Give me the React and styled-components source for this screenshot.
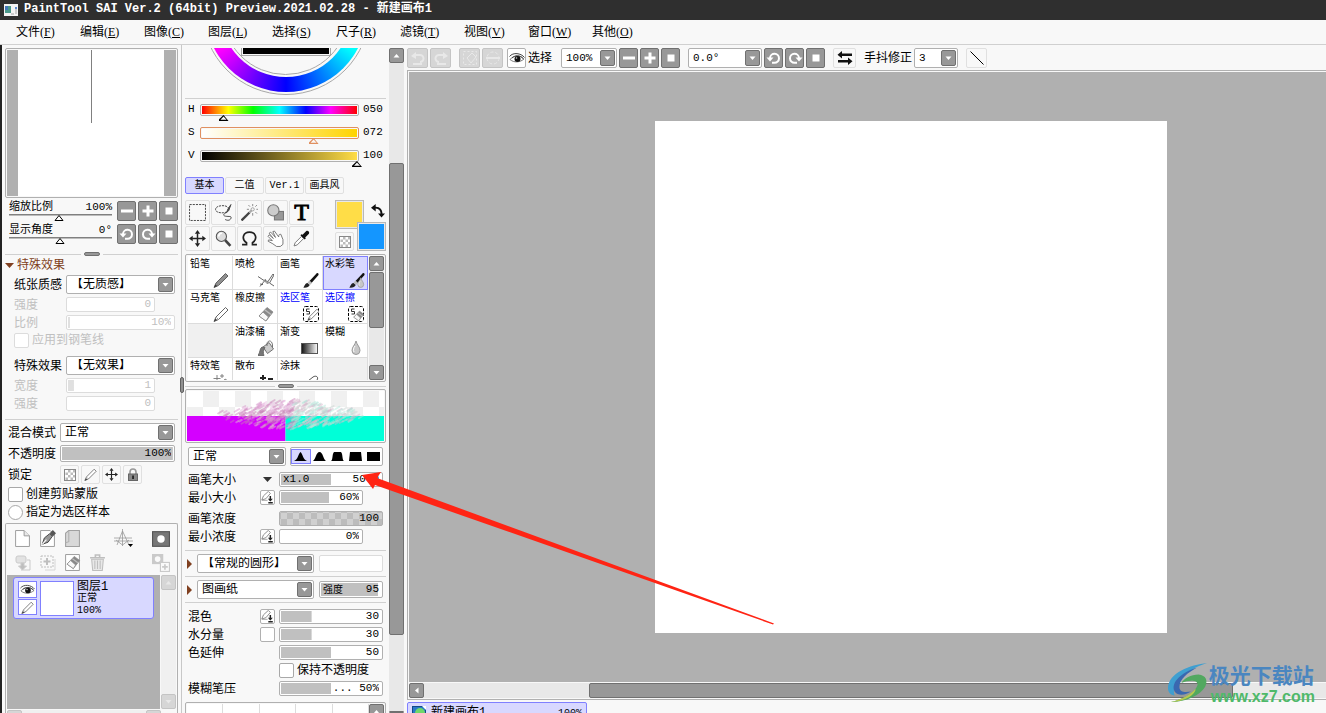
import React, { useState } from "react";
import styled, { createGlobalStyle, css } from "styled-components";

const GlobalStyle = createGlobalStyle`
  * {
    box-sizing: border-box;
  }
  body {
    margin: 0;
    overflow: hidden;
    background: #f8f8f8;
    color: #000;
    font: 12px/15px "Liberation Mono", "Noto Sans CJK SC", monospace;
  }
  button, input, select {
    font: inherit;
    color: inherit;
    margin: 0;
    padding: 0;
  }
  svg {
    display: block;
    flex: none;
  }
`;

const Window = styled.div`
  position: relative;
  display: flex;
  flex-direction: column;
  height: 100vh;
  overflow: hidden;
`;

const TitleBar = styled.header`
  flex: none;
  height: 20px;
  display: flex;
  align-items: center;
  gap: 6px;
  padding: 0 4px 1px;
  background: #2f2f2f;
  color: #fff;
  font-weight: bold;
  white-space: pre;
`;

const MenuBar = styled.nav`
  flex: none;
  height: 25px;
  display: flex;
  align-items: center;
  gap: 20px;
  padding: 2px 0 0 16px;
  border-bottom: 1px solid #d0d0d0;
`;

const MenuItem = styled.button`
  width: 44px;
  border: 0;
  background: none;
  white-space: nowrap;
  text-align: left;
  span {
    font-family: "Liberation Serif", serif;
  }
`;

const Body = styled.div`
  flex: 1;
  min-height: 0;
  display: flex;
  border-left: 2px solid #222;
`;

const LeftPanel = styled.aside`
  flex: 0 0 180px;
  display: flex;
  flex-direction: column;
  padding: 3px 3px 0;
  border-right: 1px solid #c8c8c8;
  overflow: hidden;
`;

const BrushPanel = styled.aside`
  flex: 0 0 225px;
  display: flex;
  gap: 3px;
  padding: 3px 3px 0;
  overflow: hidden;
`;

const BrushColumn = styled.div`
  flex: 0 0 201px;
  display: flex;
  flex-direction: column;
`;

const Main = styled.main`
  flex: 1;
  min-width: 0;
  display: flex;
  flex-direction: column;
  padding-top: 3px;
`;

/* shared controls */

const Rule = styled.hr`
  flex: none;
  width: 100%;
  height: 1px;
  border: 0;
  margin: ${(p) => p.$gap || "3px 0"};
  background: #d0d0d0;
`;

const SplitLine = styled.div`
  flex: none;
  display: flex;
  align-items: center;
  gap: 3px;
  height: 4px;
  margin: ${(p) => p.$gap};
  &::before,
  &::after {
    content: "";
    flex: 1;
    height: 1px;
    background: #d0d0d0;
  }
  i {
    width: 16px;
    height: 4px;
    border: 1px solid #707070;
    border-radius: 2px;
    background: #989898;
  }
`;

const GrayButton = styled.button`
  flex: none;
  width: ${(p) => p.$w || 19}px;
  height: ${(p) => p.$h || 20}px;
  display: flex;
  align-items: center;
  justify-content: center;
  border: 1px solid #707070;
  border-radius: 2px;
  background: #989898;
  color: #fff;
  ${(p) =>
    p.$off &&
    css`
      border-color: #c4c4c4;
      background: #d6d6d6;
      color: #e8e8e8;
    `}
`;

const FlatButton = styled.button`
  flex: none;
  width: ${(p) => p.$w || 19}px;
  height: ${(p) => p.$h || 20}px;
  display: flex;
  align-items: center;
  justify-content: center;
  border: 1px solid #e0e0e0;
  border-radius: 2px;
  background: ${(p) => (p.$white ? "#fff" : "#f8f8f8")};
  ${(p) => p.$white && "border-color: #b0b0b0;"}
`;

const SelectBox = styled.div`
  position: relative;
  flex: ${(p) => (p.$w ? `0 0 ${p.$w}px` : 1)};
  min-width: 0;
  height: ${(p) => p.$h || 19}px;
  select {
    display: block;
    appearance: none;
    width: 100%;
    height: 100%;
    padding: ${(p) => (p.$num ? 0 : 2)}px 0 0 4px;
    border: 1px solid #b0b0b0;
    border-radius: 2px;
    background: #fff;
    font-size: ${(p) => (p.$num ? 11 : 12)}px;
  }
  svg {
    position: absolute;
    top: 2px;
    right: 2px;
    bottom: 2px;
    height: calc(100% - 4px);
    border: 1px solid #707070;
    border-radius: 2px;
    background: #989898;
    pointer-events: none;
  }
`;

const Select = ({ id, label, value, ...rest }) => (
  <SelectBox {...rest}>
    <select id={id} aria-label={label} defaultValue={value}>
      <option>{value}</option>
    </select>
    <svg width="15" viewBox="0 0 13 13">
      <path d="M3.500 5h6l-3 3.500z" fill="#fff" />
    </svg>
  </SelectBox>
);

const checker = css`
  background: repeating-conic-gradient(#bcbcbc 0 25%, #d0d0d0 0 50%) 1px 1px / 12px 12px;
`;

const FieldBox = styled.div`
  flex: 1;
  width: ${(p) => (p.$w ? `${p.$w}px` : "auto")};
  min-width: 0;
  height: ${(p) => p.$h || 15}px;
  display: flex;
  align-items: center;
  padding: 0 3px;
  margin-right: ${(p) => p.$end || 0}px;
  border: 1px solid ${(p) => (p.$off ? "#dcdcdc" : "#b0b0b0")};
  border-radius: 2px;
  background: linear-gradient(
      ${(p) => (p.$off ? "#e0e0e0, #e0e0e0" : "#c0c0c0, #c0c0c0")}
    )
    1px 1px / calc(${(p) => p.$fill || 0}% - 1px) calc(100% - 2px) no-repeat #fff;
  color: ${(p) => (p.$off ? "#c0c0c0" : "#000")};
  font-size: 11px;
  ${(p) => p.$checker && checker}
  label {
    padding-top: 2px;
    font-size: 10px;
  }
  input {
    flex: 1;
    width: 0;
    min-width: 0;
    height: 13px;
    border: 0;
    background: none;
    text-align: right;
    outline: 0;
  }
`;

const Texture = styled(FieldBox)`
  flex: 0 0 64px;
`;

const Field = ({ id, label, value, prefix, ...rest }) => (
  <FieldBox {...rest}>
    {prefix && <span>{prefix}</span>}
    <input id={id} aria-label={label} defaultValue={value} disabled={rest.$off} />
  </FieldBox>
);

const Tick = styled.input`
  appearance: none;
  flex: none;
  width: 15px;
  height: 15px;
  margin: 0;
  border: 1px solid ${(p) => (p.disabled ? "#dcdcdc" : "#a8a8a8")};
  border-radius: ${(p) => (p.type === "radio" ? "50%" : "2px")};
  background: #fff;
`;

const VScroll = styled.div`
  flex: 0 0 15px;
  display: flex;
  flex-direction: column;
  background: #e8e8e8;
`;

const Spacer = styled.div`
  flex: ${(p) => (p.$size ? `0 0 ${p.$size}px` : 1)};
`;

const Thumb = styled.div`
  flex: none;
  width: ${(p) => p.$w || "15px"};
  height: ${(p) => p.$h || "15px"};
  border: 1px solid #707070;
  border-radius: 2px;
  background: #989898;
`;

const Caret = ({ dir = "down" }) => {
  const d = {
    up: "M3.500 8.500h6l-3-3.500z",
    down: "M3.500 5h6l-3 3.500z",
    left: "M8.500 3.500v6L5 6.500z",
    right: "M5 3.500v6l3.500-3z",
  };
  return (
    <svg width="13" height="13" viewBox="0 0 13 13">
      <path d={d[dir]} fill="currentColor" />
    </svg>
  );
};

/* navigator */

const Navigator = styled.div`
  flex: none;
  height: 150px;
  padding: 1px;
  border: 1px solid #b0b0b0;
  border-radius: 2px;
  svg {
    width: 100%;
    height: 100%;
  }
`;

const NavRow = styled.div`
  display: flex;
  gap: 2px;
  height: 20px;
  margin-top: 3px;
  padding: 0 1px 0 4px;
`;

const NavSlider = styled.div`
  flex: 1;
  margin-right: 3px;
  display: grid;
  grid-template-columns: 1fr auto;
  font-size: 11px;
  line-height: 13px;
  svg {
    grid-column: 1 / 3;
  }
`;

const Group = styled.div`
  flex: none;
  display: flex;
  flex-direction: column;
  gap: 3px;
  padding: 0 3px 0 ${(p) => p.$left}px;
  margin-top: ${(p) => p.$top || 0}px;
`;

const Row = styled.div`
  display: flex;
  align-items: center;
  gap: ${(p) => p.$gap || 0}px;
  height: ${(p) => p.$h || 19}px;
  color: ${(p) => (p.$off ? "#c0c0c0" : "#000")};
  white-space: nowrap;
  > label:first-child,
  > span:first-child {
    flex: 0 0 52px;
    padding-top: 3px;
  }
`;

const CheckRow = styled.label`
  display: flex;
  align-items: center;
  gap: 3px;
  height: 15px;
  color: ${(p) => (p.$off ? "#c0c0c0" : "#000")};
  span {
    padding-top: 2px;
  }
`;

const SectionTitle = styled.button`
  flex: none;
  display: flex;
  align-items: center;
  gap: 3px;
  height: 16px;
  margin: 1px 0 2px;
  border: 0;
  background: none;
  color: #804020;
  span {
    padding-top: 2px;
  }
`;

/* layers */

const LayerPanel = styled.section`
  flex: none;
  margin-top: 3px;
  padding: 5px 1px 0;
  border: 1px solid #b0b0b0;
  border-bottom: 0;
  border-radius: 2px 2px 0 0;
`;

const LayerTools = styled.div`
  display: grid;
  grid-template-columns: repeat(4, 17px) 21px 1fr;
  grid-auto-rows: 17px;
  gap: 7px 8px;
  padding: 1px 6px 4px 7px;
`;

const BareButton = styled.button`
  display: flex;
  justify-content: center;
  align-items: center;
  border: 0;
  background: none;
  grid-column: ${(p) => p.$col || "auto"};
  justify-self: ${(p) => (p.$end ? "end" : "auto")};
  opacity: ${(p) => (p.$off ? 0.35 : 1)};
`;

const LayerArea = styled.div`
  display: flex;
  height: 134px;
  gap: 1px;
`;

const LayerList = styled.div`
  flex: 1;
  padding: 2px 6px;
  background: #b0b0b0;
`;

const Layer = styled.div`
  display: flex;
  gap: 3px;
  height: 42px;
  padding: 3px 4px;
  border: 1px solid #8080ff;
  border-radius: 3px;
  background: #d8d8ff;
`;

const LayerSwitches = styled.div`
  display: flex;
  flex-direction: column;
  gap: 1px;
  button {
    width: 19px;
    height: 17px;
    display: flex;
    align-items: center;
    justify-content: center;
    border: 1px solid #8080ff;
    background: #fff;
  }
`;

const LayerThumb = styled.div`
  width: 34px;
  height: 35px;
  border: 1px solid #8080ff;
  background: #fff;
`;

const LayerInfo = styled.div`
  display: flex;
  flex-direction: column;
  font-size: 10px;
  line-height: 12px;
  strong {
    font-weight: normal;
    font-size: 12px;
  }
`;

const PaleScroll = styled.div`
  flex: 0 0 15px;
  display: flex;
  flex-direction: ${(p) => (p.$row ? "row" : "column")};
  justify-content: space-between;
  width: ${(p) => (p.$row ? "154px" : "auto")};
  margin-top: ${(p) => (p.$row ? "1px" : 0)};
  background: #f0f0f0;
`;

/* colour */

const WheelView = styled.div`
  flex: none;
  height: 47px;
  display: flex;
  justify-content: center;
  align-items: flex-end;
  overflow: hidden;
`;

const Ring = styled.div`
  flex: none;
  display: flex;
  align-items: center;
  justify-content: center;
  width: ${(p) => p.$d}px;
  height: ${(p) => p.$d}px;
  border-radius: 50%;
  border: ${(p) => (p.$line ? "1px solid #a8a8a8" : 0)};
  background: ${(p) => p.$bg || "#f8f8f8"};
`;

const ShadeSquare = styled.div`
  width: 90px;
  height: 90px;
  padding: 1px;
  border: 1px solid #a8a8a8;
  background: linear-gradient(#fd4, #000 90%) content-box, #f8f8f8;
`;

const ColorRow = styled.label`
  flex: none;
  display: grid;
  grid-template-columns: 12px 159px 1fr;
  height: 23px;
  padding-left: 3px;
  font-size: 11px;
  output {
    padding-left: 4px;
  }
`;

const ColorTrack = styled.div`
  display: flex;
  height: 12px;
  margin-top: 2px;
  padding: 1px;
  border: 1px solid ${(p) => (p.$hot ? "#e09060" : "#b0b0b0")};
  border-radius: 2px;
  background: linear-gradient(to right, ${(p) => p.$colors}) content-box;
`;

const ColorRange = styled.input`
  appearance: none;
  flex: 1;
  height: 17px;
  margin: 0 -5px 0 -5px;
  background: none;
  outline: 0;
  &::-webkit-slider-runnable-track {
    height: 17px;
  }
  &::-webkit-slider-thumb {
    appearance: none;
    width: 10px;
    height: 6px;
    margin-top: 9px;
    background: ${(p) => (p.$hot ? "#e09060" : "#000")};
    clip-path: polygon(
      50% 0, 100% 100%, 0 100%, 0 80%, 20% 80%, 80% 80%, 50% 26%, 20% 80%, 0 80%
    );
  }
`;

const Tabs = styled.div`
  flex: none;
  display: flex;
  gap: 1px;
  margin-top: 6px;
`;

const Tab = styled.button`
  width: 39px;
  height: 17px;
  padding-top: 1px;
  border: 1px solid ${(p) => (p.$on ? "#8080ff" : "#e0e0e0")};
  border-radius: 2px;
  background: ${(p) => (p.$on ? "#d8d8ff" : "#f8f8f8")};
  font-size: 10px;
  line-height: 14px;
`;

const ToolArea = styled.div`
  flex: none;
  display: flex;
  justify-content: space-between;
  margin-top: 6px;
`;

const ToolGrid = styled.div`
  display: grid;
  grid-template-columns: repeat(5, 25px);
  grid-auto-rows: 25px;
  gap: 1px;
`;

const TextTool = styled.span`
  font: 24px/23px "Liberation Serif", serif;
  -webkit-text-stroke: 1px #000;
`;

const Swatches = styled.div`
  display: grid;
  grid-template-columns: 22px 7px 22px;
  grid-template-rows: 22px 7px 22px;
`;

const Swatch = styled.button`
  grid-area: ${(p) => p.$area};
  border: 1px solid #b8b8b8;
  background: ${(p) => p.$color};
  box-shadow: inset 0 0 0 1px #e8e8e8;
`;

const SwapButton = styled(BareButton)`
  grid-area: 1 / 3;
  justify-self: end;
`;

const ClearColor = styled(FlatButton)`
  grid-area: 3 / 1;
  align-self: end;
`;

/* brushes */

const BrushBox = styled.div`
  flex: none;
  display: flex;
  gap: 1px;
  height: 128px;
  margin-top: 3px;
  padding: 1px 1px 1px 2px;
  border: 1px solid #b0b0b0;
  border-radius: 2px;
  overflow: hidden;
`;

const BrushGrid = styled.div`
  display: grid;
  grid-template-columns: repeat(4, 45px);
  grid-auto-rows: 34px;
  overflow: hidden;
`;

const Brush = styled.button`
  display: flex;
  flex-direction: column;
  justify-content: space-between;
  padding: 2px 3px 1px 2px;
  border: 0;
  border-right: 1px solid #dcdcdc;
  border-bottom: 1px solid #dcdcdc;
  background: ${(p) => (p.$empty ? "#f0f0f0" : "#fff")};
  color: ${(p) => (p.$blue ? "#00f" : "#000")};
  font-size: 10px;
  line-height: 14px;
  white-space: nowrap;
  text-align: left;
  svg {
    align-self: flex-end;
  }
  ${(p) =>
    p.$on &&
    css`
      padding: 1px 2px 1px 1px;
      border: 1px solid #8080ff;
      background: #d8d8ff;
    `}
`;

const Preview = styled.div`
  flex: none;
  height: 54px;
  padding: 1px;
  border: 1px solid #b0b0b0;
  border-radius: 2px;
`;

const Shapes = styled.div`
  flex: 1;
  display: flex;
  height: 19px;
  padding: 1px 0;
  border: 1px solid #b0b0b0;
  border-radius: 2px;
  background: #fff;
  button {
    flex: 1;
    display: flex;
    align-items: center;
    justify-content: center;
    border: 0;
    background: none;
  }
  button:first-child {
    border: 1px solid #8080ff;
    background: #d8d8ff;
  }
`;

const Param = styled.div`
  flex: none;
  display: grid;
  grid-template-columns: 1fr 15px 104px;
  grid-template-rows: 15px;
  gap: 4px;
  align-items: center;
  height: 15px;
  margin-top: ${(p) => p.$top || 3}px;
  padding: 0 3px;
  white-space: nowrap;
  > label {
    padding-top: 3px;
  }
`;

const TextureRow = styled.div`
  flex: none;
  display: flex;
  align-items: center;
  gap: 5px;
  padding: 0 3px 0 2px;
`;

const KeepOpacity = styled(CheckRow)`
  flex: none;
  margin-top: 3px;
  padding-left: 94px;
`;

const StrokeBox = styled.div`
  flex: none;
  display: grid;
  grid-template-columns: repeat(5, 1fr) 15px;
  height: 30px;
  margin-top: 6px;
  padding: 1px;
  border: 1px solid #b0b0b0;
  border-radius: 2px;
  i {
    border-right: 1px solid #dcdcdc;
    background: #fff;
  }
`;

/* canvas side */

const Toolbar = styled.div`
  flex: none;
  display: flex;
  align-items: center;
  gap: 2px;
  height: 20px;
`;

const Set = styled.div`
  display: flex;
  align-items: center;
  gap: 2px;
  margin-right: ${(p) => (p.$tight ? p.$tight : 6)}px;
  white-space: nowrap;
  > span,
  > label {
    padding-top: 3px;
  }
`;

const CanvasBox = styled.div`
  flex: 1;
  min-height: 0;
  display: flex;
  flex-direction: column;
  gap: 1px;
  margin-top: 2px;
  padding: 1px 0 1px 1px;
  border: 1px solid #b0b0b0;
  border-right: 0;
`;

const Workspace = styled.div`
  flex: 1;
  min-height: 0;
  display: flex;
  align-items: center;
  padding-left: 246px;
  background: #b0b0b0;
`;

const Paper = styled.div`
  flex: none;
  width: 512px;
  height: 512px;
  background: #fff;
`;

const HScroll = styled.div`
  flex: 0 0 15px;
  display: flex;
  background: #e8e8e8;
`;

const DocTabs = styled.div`
  flex: 0 0 13px;
  padding-top: 2px;
  overflow: hidden;
`;

const DocTab = styled.button`
  display: flex;
  align-items: center;
  gap: 5px;
  width: 180px;
  height: 22px;
  padding: 0 4px;
  border: 1px solid #8080ff;
  border-radius: 2px;
  background: #d8d8ff;
  span {
    flex: 1;
    text-align: left;
  }
  small {
    font-size: 10px;
  }
`;

const Watermark = styled.div`
  position: absolute;
  right: 11px;
  bottom: 6px;
  display: flex;
  color: #4a86c0;
  font: bold 21px/25px "Noto Sans CJK SC", sans-serif;
  a {
    display: block;
    padding-left: 2px;
    color: #4fb96a;
    font: bold 16px/20px "Liberation Sans", sans-serif;
    text-decoration: none;
  }
`;

const Pointer = styled.svg`
  position: absolute;
  left: 360px;
  top: 470px;
  pointer-events: none;
`;

const SideGrip = styled.i`
  position: absolute;
  left: 180px;
  top: 377px;
  width: 4px;
  height: 16px;
  border: 1px solid #606060;
  border-radius: 2px;
  background: #909090;
`;

/* glyphs */

const Pencil = ({ fill = "#fff", tip = "#333" }) => (
  <g>
    <path d="M1 15.500l2-4.500L12.500 1.500l2.500 2.500L5.500 13.500z" fill={fill} stroke="#555" strokeWidth=".9" />
    <path d="M3.500 11.500l2 2" stroke="#888" strokeWidth=".8" />
    <path d="M1 15.500l1.500-3 1.500 1.500z" fill={tip} />
  </g>
);

const Eraser = () => (
  <g stroke="#888" strokeWidth=".8">
    <path d="M1 10l8-8.500 6 4.500-7 9z" fill="#888" />
    <path d="M1 10l4-4 5.500 5-2.500 4z" fill="#f8f8f8" />
    <path d="M7 4l6 4.500" stroke="#bbb" strokeWidth="1.500" />
  </g>
);

const Drop = () => (
  <g>
    <path d="M8 1c1 4 4 6 4 9.500a4 4 0 0 1-8 0C4 7 7 5 8 1z" fill="#c8c8c8" stroke="#999" />
    <path d="M7 6c-1.500 2-2 4-1 6" stroke="#fff" fill="none" />
  </g>
);

const PaintBrush = () => (
  <g>
    <path d="M6.500 9L13.500 1.500c1-1 2.500 0 2 1.500L8.500 11z" fill="#111" />
    <path d="M4.500 10.500l2-2L9 11l-2 2z" fill="#bbb" />
    <path d="M0 15.500c1.500-.5 1.500-4 4.500-4.500l2.200 2c-.5 2-3.700 3-6.700 2.500z" fill="#222" />
  </g>
);

const Marquee = () => (
  <g fill="none">
    <rect x=".5" y=".5" width="15" height="15" rx="2" stroke="#000" strokeDasharray="3 1.500" />
    <path d="M6.500 3h-3v2.500h3V8h-3" stroke="#333" />
  </g>
);

const glyphs = {
  minus: <path d="M2 6.500h12v3H2z" fill="currentColor" />,
  plus: <path d="M2.500 6.500h4v-4h3v4h4v3h-4v4h-3v-4h-4z" fill="currentColor" />,
  square: <path d="M4.500 4.500h7v7h-7z" fill="currentColor" />,
  ccw: (
    <g fill="none" stroke="currentColor" strokeWidth="2">
      <path d="M4 9.500V8a4.500 4.500 0 1 1 4.500 4.800H6" />
      <path d="M.500 7.500h7L4 11.500z" fill="currentColor" stroke="none" />
    </g>
  ),
  cw: (
    <g fill="none" stroke="currentColor" strokeWidth="2">
      <path d="M12 9.500V8a4.500 4.500 0 1 0-4.500 4.800H10" />
      <path d="M15.500 7.500h-7l3.500 4z" fill="currentColor" stroke="none" />
    </g>
  ),
  undo: (
    <g fill="none" stroke="currentColor" strokeWidth="2">
      <path d="M4 5h6a3.500 3.500 0 0 1 0 7M3 14h9" />
      <path d="M1 6l5-4v7z" fill="currentColor" stroke="none" />
    </g>
  ),
  redo: (
    <g fill="none" stroke="currentColor" strokeWidth="2">
      <path d="M12 5H6a3.500 3.500 0 0 0 0 7M4 14h9" />
      <path d="M15 6l-5-4v7z" fill="currentColor" stroke="none" />
    </g>
  ),
  deselect: (
    <g fill="none" stroke="currentColor">
      <rect x="1.500" y="1.500" width="13" height="13" strokeDasharray="2 2" />
      <path d="M5 8l5-5 4 4-5 6z" />
    </g>
  ),
  invert: (
    <g fill="none" stroke="currentColor">
      <ellipse cx="8" cy="8" rx="6" ry="6" strokeDasharray="3 2" />
      <path d="M1 8h14" strokeWidth="2" />
    </g>
  ),
  eye: (
    <g>
      <path d="M1 9.500c3-4 10-5 14-.5-4 3.500-10 4-14 .5z" fill="#fff" stroke="#555" strokeWidth=".8" />
      <path d="M.500 6.500C4 2 12 3 15.500 7.500M3 8c3-3 8-3 11 .5" fill="none" stroke="#444" />
      <circle cx="8.500" cy="9" r="3" fill="#111" />
      <circle cx="7.500" cy="8" r=".8" fill="#ccc" />
    </g>
  ),
  swap: (
    <g fill="#111">
      <path d="M5 3.500h10v2.500H5V8.500L.5 4.800 5 1z" />
      <path d="M11 10H1v2.500h10V15l4.500-3.800L11 7.500z" />
    </g>
  ),
  line: <path d="M1.500 1.500l13 13" stroke="#000" />,
  select: (
    <rect x=".5" y=".5" width="15" height="15" fill="none" stroke="#444" strokeWidth=".9" strokeDasharray="2 1" />
  ),
  lasso: (
    <g fill="none" stroke="#444" strokeWidth=".9">
      <path d="M13 4.500C12 0 .5 1 .5 5c0 4 9 4 11.500 2" strokeDasharray="2 .8" />
      <path d="M11 8c-3 1-4 3-1 3.500s6-.5 5 2-4 2-5.500 1" />
      <path d="M11 8l1-3 3-4.500-2 5.500z" fill="#555" />
    </g>
  ),
  wand: (
    <g stroke="#444" fill="none">
      <path d="M.500 15.500L8 8" strokeWidth="2.200" />
      <path d="M8 8l2-2" stroke="#aaa" strokeWidth="2" />
      <path
        d="M11 0v2M11 8.500v2.500M5.500 5h2M14.500 5H16M7 1l1.500 1.500M15 1l-1.500 1.500M15 9l-1.500-1.500"
        stroke="#888"
        strokeWidth=".9"
      />
      <circle cx="11" cy="5" r="1.500" stroke="#999" strokeWidth=".8" />
    </g>
  ),
  shape: (
    <g stroke="#777">
      <rect x="7" y="7" width="8.500" height="8" fill="#999" />
      <circle cx="6" cy="6" r="5.300" fill="#ccc" />
    </g>
  ),
  move: (
    <g fill="#222">
      <path d="M7.300 3h1.400v10H7.300zM3 7.300h10v1.400H3z" />
      <path d="M8 0l2.500 3.500h-5zM8 16l2.500-3.500h-5zM0 8l3.500-2.500v5zM16 8l-3.500-2.500v5z" />
    </g>
  ),
  zoom: (
    <g>
      <path d="M9.500 9.500l5 5.500" stroke="#444" strokeWidth="2.500" />
      <circle cx="6" cy="6" r="4.800" fill="#ddd" stroke="#555" />
      <path d="M3.500 6a3 3 0 0 1 3-3" stroke="#fff" fill="none" strokeWidth="1.500" />
    </g>
  ),
  rotate: (
    <path
      d="M1 13.800h4.200V12C0 8.500 2 2 8 2s8 6.500 2.800 10v1.800H15"
      fill="none"
      stroke="#222"
      strokeWidth="1.600"
    />
  ),
  hand: (
    <path
      d="M1 6l1-1.500L6 8 2 3l1.500-1L8 7 5.500 1.500 7 1l4 5.500c0-2 .5-2.500 2-2.500l2 5v4.500L12.500 15.500H9L5.500 13 1 10.500l.5-1.200 3.500.7z"
      fill="#fff"
      stroke="#666"
      strokeWidth=".8"
    />
  ),
  dropper: (
    <g>
      <path d="M1 15l1-3 6-6 2 2-6 6z" fill="#fff" stroke="#777" strokeWidth=".9" />
      <path d="M7 5l1-1 1 .5L12.500 1C14 0 16 2 15 3.500L11.500 7l.5 1-1 1z" fill="#111" />
    </g>
  ),
  pencil: <Pencil fill="#909090" />,
  marker: <Pencil />,
  airbrush: (
    <g fill="none" stroke="#555" strokeWidth=".9">
      <path d="M0 4.500l6 4M2 14.500l4-5M2 12l3 .5M6 8.500l4 1 5-7.500 1 1-4.500 8 4.500 3M10 9.500L9 12M7 7l1 2.500" />
      <path d="M5 8.500l6 2.500" stroke="#999" strokeWidth="1.800" />
    </g>
  ),
  brush: <PaintBrush />,
  water: (
    <g>
      <PaintBrush />
      <g transform="translate(6 5) scale(.72)">
        <Drop />
      </g>
    </g>
  ),
  eraser: <Eraser />,
  selPen: (
    <g>
      <Marquee />
      <g transform="translate(4 2) scale(.8)">
        <Pencil />
      </g>
    </g>
  ),
  selErase: (
    <g>
      <Marquee />
      <g transform="translate(5 4) scale(.72)">
        <Eraser />
      </g>
    </g>
  ),
  bucket: (
    <g stroke="#666" strokeWidth=".9">
      <path d="M5 7l6-4.500L15.500 9l-6 4.500z" fill="#ccc" />
      <path d="M9 6c-1-6 5-7 5.500-1v2" fill="none" />
      <path d="M7 7.500L4 7c-2.500 1.500-1.500 5-4 8.500h6C5 13 5 10.500 7 7.500z" fill="#777" />
    </g>
  ),
  drop: <Drop />,
  sparkle: (
    <g stroke="#777" fill="none" strokeWidth=".9">
      <path d="M4 1v7M.500 4.500h7M9 0v4M7 2h4" />
      <path d="M6 14l6-9 3 2-6 9z" />
    </g>
  ),
  scatter: <path d="M2 3h2V1h2v2h2v2H6v2H4V5H2zM10 4h5v5h-5z" fill="#222" />,
  smudge: <path d="M3 12l2-5 5-4c3-2 6 0 4 3l-6 6z" fill="#fff" stroke="#555" />,
  checker: (
    <g>
      <rect x="2.500" y="2.500" width="11" height="11" fill="#fff" stroke="#888" />
      <path
        d="M6 3h2.500v2.500H6zM11 3h2v2.500h-2zM3.500 5.500H6V8H3.500zM8.500 5.500H11V8H8.500zM6 8h2.500v2.500H6zM11 8h2v2.500h-2zM3.500 10.500H6V13H3.500zM8.500 10.500H11V13H8.500z"
        fill="#bbb"
      />
    </g>
  ),
  lock: (
    <g>
      <path d="M5 7V5a3 3 0 0 1 6 0v2" fill="none" stroke="#999" strokeWidth="1.600" />
      <rect x="3.500" y="7" width="9" height="6.500" fill="#888" stroke="#666" />
      <path d="M7.300 8.500h1.500V12H7.300z" fill="#111" />
    </g>
  ),
  pressure: (
    <g>
      <path d="M1 11l2-5 6-5.500L11.500 3 6 9.500z" fill="#fff" stroke="#777" />
      <path d="M1 11.500h7" stroke="#999" />
      <path d="M11.500 6v6M9 14.500h5.500" stroke="#222" strokeWidth="1.800" />
      <path d="M8.500 9.500h6l-3 3.500z" fill="#222" />
    </g>
  ),
  page: (
    <g>
      <path d="M1.500.5h8l5 5v10h-13z" fill="#fff" stroke="#999" strokeWidth=".9" />
      <path d="M9.500.5v5h5" fill="#e8e8e8" stroke="#999" strokeWidth=".9" />
    </g>
  ),
  penPage: (
    <g>
      <path d="M1.500.5h9l4 4v11h-13z" fill="#fff" stroke="#999" strokeWidth=".9" />
      <path d="M3 13.500l2-6 5-4 2.500 2.500-4 5.500z" fill="#999" stroke="#333" strokeWidth=".8" />
      <path d="M3 13.500l4-4.500" stroke="#fff" />
      <path d="M10 3l3-3 3 3-3 3z" fill="#555" />
    </g>
  ),
  folder: (
    <g>
      <path d="M1.500 3l3-2.500h10v15h-13z" fill="#d8d8d8" stroke="#a0a0a0" />
      <path d="M1.500 12l3-1V1" fill="none" stroke="#b0b0b0" />
    </g>
  ),
  mask: (
    <g>
      <rect x=".5" y="1.500" width="15" height="13" fill="#777" stroke="#555" />
      <circle cx="8" cy="8" r="3.300" fill="#fff" />
    </g>
  ),
  merge: (
    <g fill="#bbb" stroke="#777">
      <rect x="1" y="1" width="10" height="7" rx="2" />
      <path d="M12 5h3v10H6" fill="none" />
      <path d="M6 8h3v3h2.500l-4 4-4-4H6z" fill="#555" />
    </g>
  ),
  copy: (
    <g fill="none" stroke="#555">
      <rect x="1" y="1" width="12" height="11" strokeDasharray="2 1" />
      <path d="M7 3v7M3.500 6.500h7" strokeWidth="2" />
      <path d="M15 4v11H5" stroke="#999" />
    </g>
  ),
  clear: (
    <g>
      <path d="M1.500.5h13v15h-13z" fill="#fff" stroke="#999" strokeWidth=".9" />
      <g transform="translate(2 1) scale(.85)">
        <Eraser />
      </g>
    </g>
  ),
  trash: (
    <g fill="#ccc" stroke="#555">
      <path d="M1 3.500h14M6 3V1h4v2" fill="none" strokeWidth="1.500" />
      <path d="M2.500 5h11l-1 10.500h-9zM5.500 6v8M8 6v8M10.500 6v8" />
    </g>
  ),
  maskAdd: (
    <g>
      <rect x="0" y="0" width="10" height="9" fill="#777" />
      <circle cx="5" cy="4.500" r="2.500" fill="#fff" />
      <rect x="7.500" y="7.500" width="8" height="8" fill="#fff" stroke="#777" />
      <path d="M11.500 9v5M9 11.500h5" stroke="#777" strokeWidth="1.500" />
    </g>
  ),
  swapColor: (
    <path
      d="M0 4l5-4v2.800c5 .2 7 3 7.200 7.200H15l-3.800 4.500L7.500 10h2.700c-.2-3-1.700-5-5.200-5.200V8z"
      fill="#111"
    />
  ),
};

const Icon = ({ name, size = 16 }) => (
  <svg width={size} height={size} viewBox="0 0 16 16">
    {glyphs[name]}
  </svg>
);

const GradientIcon = () => (
  <svg width="18" height="16" viewBox="0 0 18 16">
    <defs>
      <linearGradient id="ramp">
        <stop offset="0" stopColor="#111" />
        <stop offset="1" stopColor="#fff" />
      </linearGradient>
    </defs>
    <rect x=".5" y="3.500" width="16" height="10" fill="url(#ramp)" stroke="#555" />
  </svg>
);

// small repeatable noise for the stroke preview
const strokes = Array.from({ length: 420 }, (_, i) => {
  const rnd = (k) => {
    const v = Math.sin(i * 12.9898 + k * 78.233) * 43758.5453;
    return v - Math.floor(v);
  };
  const t = (rnd(1) + rnd(4)) / 2;
  const spread = Math.sin(Math.PI * t) * 12 + 2;
  const colors =
    t < 0.52 ? ["#d58fc8", "#c77fb4", "#e8b8e0"] : ["#d8b4cc", "#c8d4d0", "#b4e8dc"];
  return {
    x: 26 + t * 150,
    y: 26 + (rnd(2) - 0.55) * spread * 2,
    len: 2 + rnd(3) * 3,
    color: colors[i % 3],
  };
});

const StrokePreview = () => (
  <Preview>
    <svg width="100%" height="50">
      <defs>
        <pattern id="squares" width="32" height="32" patternUnits="userSpaceOnUse">
          <rect width="32" height="32" fill="#fff" />
          <path d="M16 0h16v16H16zM0 16h16v16H0z" fill="#f0f0f0" />
        </pattern>
      </defs>
      <rect width="100%" height="26" fill="url(#squares)" />
      <rect y="25" width="50%" height="26" fill="#d400ff" />
      <rect x="50%" y="25" width="50%" height="26" fill="#00ffd8" />
      {strokes.map((s, i) => (
        <path
          key={i}
          d={`M${s.x} ${s.y}l${s.len} ${-s.len * 0.6}`}
          stroke={s.color}
          strokeWidth="1.800"
          strokeLinecap="round"
          opacity=".45"
        />
      ))}
    </svg>
  </Preview>
);

const Arrow = ({ at }) => (
  <svg width="103" height="7" viewBox="0 0 103 7">
    <path d="M0 0h103v1.500H0z" fill="#808080" />
    <path d={`M${at} 1.500l4 5h-8z`} fill="#fff" stroke="#000" />
  </svg>
);

const menus = [
  ["文件", "F"],
  ["编辑", "E"],
  ["图像", "C"],
  ["图层", "L"],
  ["选择", "S"],
  ["尺子", "R"],
  ["滤镜", "T"],
  ["视图", "V"],
  ["窗口", "W"],
  ["其他", "O"],
];

const tools = ["select", "lasso", "wand", "shape", "text", "move", "zoom", "rotate", "hand", "dropper"];

const brushes = [
  ["铅笔", "pencil"],
  ["喷枪", "airbrush"],
  ["画笔", "brush"],
  ["水彩笔", "water"],
  ["马克笔", "marker"],
  ["橡皮擦", "eraser"],
  ["选区笔", "selPen"],
  ["选区擦", "selErase"],
  null,
  ["油漆桶", "bucket"],
  ["渐变", "gradient"],
  ["模糊", "drop"],
  ["特效笔", "sparkle"],
  ["散布", "scatter"],
  ["涂抹", "smudge"],
  null,
];

const tips = [
  "M0 9C4 8 4.500 1 6.500 0 8.500 1 9 8 13 9z",
  "M0 9C3 7 3 0 6.500 0S10 7 13 9z",
  "M0 9c2-1 1-7 3-9h7c2 2 1 8 3 9z",
  "M0 9L1 0h11l1 9z",
  "M0 0h13v9H0z",
];

const LeftSide = () => (
  <LeftPanel>
    <Navigator>
      <svg viewBox="0 0 169 146" preserveAspectRatio="none">
        <path d="M0 0h169v146H0z" fill="#b0b0b0" />
        <path d="M11 0h146v146H11z" fill="#fff" />
        <path d="M84 0h1v73h-1z" fill="#808080" />
      </svg>
    </Navigator>
    <NavRow>
      <NavSlider>
        <span>缩放比例</span>
        <span>100%</span>
        <Arrow at={50} />
      </NavSlider>
      <GrayButton aria-label="缩小"><Icon name="minus" /></GrayButton>
      <GrayButton aria-label="放大"><Icon name="plus" /></GrayButton>
      <GrayButton aria-label="重置"><Icon name="square" /></GrayButton>
    </NavRow>
    <NavRow>
      <NavSlider>
        <span>显示角度</span>
        <span>0°</span>
        <Arrow at={51} />
      </NavSlider>
      <GrayButton aria-label="左转"><Icon name="ccw" /></GrayButton>
      <GrayButton aria-label="右转"><Icon name="cw" /></GrayButton>
      <GrayButton aria-label="重置"><Icon name="square" /></GrayButton>
    </NavRow>
    <SplitLine $gap="8px 0 0"><i /></SplitLine>
    <SectionTitle>
      <svg width="9" height="5"><path d="M0 0h9L4.500 5z" fill="#804020" /></svg>
      <span>特殊效果</span>
    </SectionTitle>
    <Group $left={9}>
      <Row>
        <label htmlFor="paper">纸张质感</label>
        <Select id="paper" value="【无质感】" />
      </Row>
      <Row $off $h={15}>
        <label htmlFor="paperPower">强度</label>
        <Field id="paperPower" value="0" $off $end={20} />
      </Row>
      <Row $off $h={15}>
        <label htmlFor="paperScale">比例</label>
        <Field id="paperScale" value="10%" $off $fill={3} />
      </Row>
      <CheckRow $off>
        <Tick type="checkbox" disabled />
        <span>应用到钢笔线</span>
      </CheckRow>
    </Group>
    <Group $left={9} $top={8}>
      <Row>
        <label htmlFor="effect">特殊效果</label>
        <Select id="effect" value="【无效果】" />
      </Row>
      <Row $off $h={15}>
        <label htmlFor="effectWidth">宽度</label>
        <Field id="effectWidth" value="1" $off $end={20} $fill={8} />
      </Row>
      <Row $off $h={15}>
        <label htmlFor="effectPower">强度</label>
        <Field id="effectPower" value="0" $off $end={20} />
      </Row>
    </Group>
    <Rule $gap="8px 0 3px" />
    <Group $left={3}>
      <Row>
        <label htmlFor="mode">混合模式</label>
        <Select id="mode" value="正常" />
      </Row>
      <Row $h={17}>
        <label htmlFor="opacity">不透明度</label>
        <Field id="opacity" value="100%" $fill={99} $h={17} />
      </Row>
      <Row>
        <span>锁定</span>
        <Set>
          <FlatButton $h={19} aria-label="锁定透明"><Icon name="checker" /></FlatButton>
          <FlatButton $h={19} aria-label="锁定绘制"><Icon name="marker" size={13} /></FlatButton>
          <FlatButton $h={19} aria-label="锁定移动"><Icon name="move" size={13} /></FlatButton>
          <FlatButton $h={19} aria-label="全部锁定"><Icon name="lock" /></FlatButton>
        </Set>
      </Row>
      <CheckRow>
        <Tick type="checkbox" />
        <span>创建剪贴蒙版</span>
      </CheckRow>
      <CheckRow>
        <Tick type="radio" />
        <span>指定为选区样本</span>
      </CheckRow>
    </Group>
    <LayerPanel>
      <LayerTools>
        <BareButton aria-label="新建图层"><Icon name="page" size={17} /></BareButton>
        <BareButton aria-label="新建钢笔图层"><Icon name="penPage" size={17} /></BareButton>
        <BareButton aria-label="新建图层组"><Icon name="folder" size={17} /></BareButton>
        <BareButton $col="5" aria-label="透视尺">
          <svg width="21" height="19" viewBox="0 0 21 19">
            <path
              d="M8.500 0v17M0 12h19M3 16L8.500 2 15 16M0 9h18M2 11l6.500 5 6.500-5"
              fill="none"
              stroke="#999"
              strokeWidth=".8"
            />
            <path d="M14 15h5l-2.500 3z" />
          </svg>
        </BareButton>
        <BareButton $end aria-label="图层蒙版"><Icon name="mask" size={18} /></BareButton>
        <BareButton $off aria-label="向下合并"><Icon name="merge" /></BareButton>
        <BareButton $off aria-label="复制图层"><Icon name="copy" /></BareButton>
        <BareButton aria-label="清除图层"><Icon name="clear" size={17} /></BareButton>
        <BareButton $off aria-label="删除图层"><Icon name="trash" size={17} /></BareButton>
        <BareButton $off $col="6" $end aria-label="添加蒙版"><Icon name="maskAdd" size={18} /></BareButton>
      </LayerTools>
      <LayerArea>
        <LayerList>
          <Layer>
            <LayerSwitches>
              <button aria-label="显示"><Icon name="eye" size={15} /></button>
              <button aria-label="编辑"><Icon name="marker" size={13} /></button>
            </LayerSwitches>
            <LayerThumb />
            <LayerInfo>
              <strong>图层1</strong>
              <span>正常</span>
              <span>100%</span>
            </LayerInfo>
          </Layer>
        </LayerList>
        <PaleScroll>
          <GrayButton $off $w={15} $h={15} aria-label="上"><Caret dir="up" /></GrayButton>
          <GrayButton $off $w={15} $h={15} aria-label="下"><Caret /></GrayButton>
        </PaleScroll>
      </LayerArea>
      <PaleScroll $row>
        <GrayButton $off $w={15} $h={15} aria-label="左"><Caret dir="left" /></GrayButton>
        <GrayButton $off $w={15} $h={15} aria-label="右"><Caret dir="right" /></GrayButton>
      </PaleScroll>
    </LayerPanel>
  </LeftPanel>
);

const PressureButton = () => (
  <FlatButton $white $w={15} $h={15} aria-label="压感">
    <Icon name="pressure" size={13} />
  </FlatButton>
);

const ColorSlider = ({ name, max, value, colors, hot }) => (
  <ColorRow>
    <span>{name}</span>
    <ColorTrack $colors={colors} $hot={hot}>
      <ColorRange type="range" max={max} defaultValue={value} $hot={hot} />
    </ColorTrack>
    <output>{String(value).padStart(3, "0")}</output>
  </ColorRow>
);

const BrushSide = () => {
  const [brush, setBrush] = useState("water");
  return (
    <BrushPanel>
      <BrushColumn>
        <WheelView>
          <Ring $d={168} $line>
            <Ring
              $d={162}
              $bg="conic-gradient(from 0deg, #ff0, #0f0 60deg, #0ff 120deg, #00f 180deg, #f0f 240deg, #f00 300deg, #ff0)"
            >
              <Ring $d={132}>
                <Ring $d={127} $line>
                  <ShadeSquare />
                </Ring>
              </Ring>
            </Ring>
          </Ring>
        </WheelView>
        <Rule />
        <ColorSlider
          name="H"
          max={360}
          value={50}
          colors="#f00, #ff0 17%, #0f0 33%, #0ff 50%, #00f 67%, #f0f 83%, #f00"
        />
        <ColorSlider name="S" max={100} value={72} colors="#fff, #ffd400" hot />
        <ColorSlider name="V" max={100} value={100} colors="#000, #ffdd47" />
        <Tabs>
          <Tab $on>基本</Tab>
          <Tab>二值</Tab>
          <Tab>Ver.1</Tab>
          <Tab>画具风</Tab>
        </Tabs>
        <ToolArea>
          <ToolGrid>
            {tools.map((t) => (
              <FlatButton key={t} $w={25} $h={25} aria-label={t}>
                {t === "text" ? <TextTool>T</TextTool> : <Icon name={t} size={17} />}
              </FlatButton>
            ))}
          </ToolGrid>
          <Swatches>
            <Swatch $area="1 / 1 / 3 / 3" $color="#ffdd47" aria-label="前景色" />
            <Swatch $area="2 / 2 / 4 / 4" $color="#1496ff" aria-label="背景色" />
            <SwapButton aria-label="交换"><Icon name="swapColor" size={15} /></SwapButton>
            <ClearColor $h={19} aria-label="透明"><Icon name="checker" /></ClearColor>
          </Swatches>
        </ToolArea>
        <BrushBox>
          <BrushGrid>
            {brushes.map((b, i) =>
              b ? (
                <Brush
                  key={i}
                  $on={brush === b[1]}
                  $blue={b[1].startsWith("sel")}
                  onClick={() => setBrush(b[1])}
                >
                  {b[0]}
                  {b[1] === "gradient" ? <GradientIcon /> : <Icon name={b[1]} />}
                </Brush>
              ) : (
                <Brush key={i} $empty as="div" />
              )
            )}
          </BrushGrid>
          <VScroll>
            <GrayButton $w={15} $h={15} aria-label="上"><Caret dir="up" /></GrayButton>
            <Spacer $size={1} />
            <Thumb $h="56px" />
            <Spacer />
            <GrayButton $w={15} $h={15} aria-label="下"><Caret /></GrayButton>
          </VScroll>
        </BrushBox>
        <SplitLine $gap="2px 0 1px"><i /></SplitLine>
        <StrokePreview />
        <Group $left={3} $top={4}>
          <Row $gap={4}>
            <Select label="混合" value="正常" $w={98} />
            <Shapes>
              {tips.map((d, i) => (
                <button key={i} aria-label={`形状${i + 1}`}>
                  <svg width="13" height="9"><path d={d} /></svg>
                </button>
              ))}
            </Shapes>
          </Row>
        </Group>
        <Param $top={6}>
          <label htmlFor="size">画笔大小</label>
          <svg width="15" height="15"><path d="M3 5h9l-4.500 5z" fill="#333" /></svg>
          <Field id="size" prefix="x1.0" value="50.0" $fill={50} />
        </Param>
        <Param>
          <label htmlFor="minSize">最小大小</label>
          <PressureButton />
          <Field id="minSize" value="60%" $fill={60} $w={84} />
        </Param>
        <Param $top={6}>
          <label htmlFor="density">画笔浓度</label>
          <span />
          <Field id="density" value="100" $checker />
        </Param>
        <Param>
          <label htmlFor="minDensity">最小浓度</label>
          <PressureButton />
          <Field id="minDensity" value="0%" $w={84} />
        </Param>
        <Rule $gap="6px 0 3px" />
        <TextureRow>
          <svg width="5" height="10"><path d="M0 0l5 5-5 5z" fill="#804020" /></svg>
          <Select label="笔刷形状" value="【常规的圆形】" />
          <Texture $off $h={17} />
        </TextureRow>
        <Rule />
        <TextureRow>
          <svg width="5" height="10"><path d="M0 0l5 5-5 5z" fill="#804020" /></svg>
          <Select label="笔刷材质" value="图画纸" />
          <Texture $h={17} $fill={94}>
            <label htmlFor="texture">强度</label>
            <input id="texture" defaultValue="95" />
          </Texture>
        </TextureRow>
        <Rule />
        <Param>
          <label htmlFor="blend">混色</label>
          <PressureButton />
          <Field id="blend" value="30" $fill={31} />
        </Param>
        <Param>
          <label htmlFor="dilution">水分量</label>
          <FlatButton $white $w={15} $h={15} aria-label="压感" />
          <Field id="dilution" value="30" $fill={31} />
        </Param>
        <Param>
          <label htmlFor="persist">色延伸</label>
          <span />
          <Field id="persist" value="50" $fill={50} />
        </Param>
        <KeepOpacity>
          <Tick type="checkbox" />
          <span>保持不透明度</span>
        </KeepOpacity>
        <Param>
          <label htmlFor="blur">模糊笔压</label>
          <span />
          <Field id="blur" value="... 50%" $fill={50} />
        </Param>
        <StrokeBox>
          <i />
          <i />
          <i />
          <i />
          <i />
          <GrayButton $w={15} $h={15} aria-label="上"><Caret dir="up" /></GrayButton>
        </StrokeBox>
      </BrushColumn>
      <VScroll>
        <GrayButton $w={15} $h={15} aria-label="上"><Caret dir="up" /></GrayButton>
        <Spacer $size={100} />
        <Thumb $h="472px" />
        <Spacer />
        <Thumb $h="2px" />
      </VScroll>
    </BrushPanel>
  );
};

const CanvasSide = () => (
  <Main>
    <Toolbar>
      <Set>
        <GrayButton $off $w={21} aria-label="撤销"><Icon name="undo" /></GrayButton>
        <GrayButton $off $w={21} aria-label="重做"><Icon name="redo" /></GrayButton>
      </Set>
      <Set $tight={2}>
        <GrayButton $off $w={21} aria-label="取消选择"><Icon name="deselect" /></GrayButton>
        <GrayButton $off $w={21} aria-label="反选"><Icon name="invert" /></GrayButton>
      </Set>
      <Set $tight={7}>
        <FlatButton $white aria-label="显示选区"><Icon name="eye" /></FlatButton>
        <span>选择</span>
      </Set>
      <Set>
        <Select label="缩放" value="100%" $w={56} $h={20} $num />
        <GrayButton aria-label="缩小"><Icon name="minus" /></GrayButton>
        <GrayButton aria-label="放大"><Icon name="plus" /></GrayButton>
        <GrayButton aria-label="原大"><Icon name="square" /></GrayButton>
      </Set>
      <Set>
        <Select label="角度" value="0.0°" $w={74} $h={20} $num />
        <GrayButton aria-label="左转"><Icon name="ccw" /></GrayButton>
        <GrayButton aria-label="右转"><Icon name="cw" /></GrayButton>
        <GrayButton aria-label="重置"><Icon name="square" /></GrayButton>
      </Set>
      <Set>
        <FlatButton $w={23} aria-label="翻转"><Icon name="swap" /></FlatButton>
      </Set>
      <Set>
        <label htmlFor="stabilizer">手抖修正</label>
        <Select id="stabilizer" value="3" $w={44} $h={20} $num />
      </Set>
      <FlatButton $w={21} aria-label="直线"><Icon name="line" /></FlatButton>
    </Toolbar>
    <CanvasBox>
      <Workspace>
        <Paper />
      </Workspace>
      <HScroll>
        <GrayButton $w={15} $h={15} aria-label="左"><Caret dir="left" /></GrayButton>
        <Spacer $size={165} />
        <Thumb $w="644px" />
      </HScroll>
    </CanvasBox>
    <DocTabs>
      <DocTab>
        <svg width="14" height="14" viewBox="0 0 14 14">
          <rect x=".5" y=".5" width="13" height="13" fill="#2a78c8" stroke="#124a88" />
          <circle cx="8" cy="7" r="5" fill="#6fd86a" />
          <path d="M10 0h4v4z" fill="#fff" />
        </svg>
        <span>新建画布1</span>
        <small>100%</small>
      </DocTab>
    </DocTabs>
  </Main>
);

const App = () => (
  <Window>
    <GlobalStyle />
    <TitleBar>
      <svg width="14" height="12" viewBox="0 0 14 12">
        <rect width="14" height="12" fill="#f4f4f4" />
        <rect x="1" y="2" width="6" height="7" fill="#4a9a8c" />
        <rect x="1" y="2" width="3" height="4" fill="#4478b8" />
        <path d="M11 3h2v7h-2zM7 9h3v2H7z" fill="#ccc" />
        <path d="M11 3h2v2h-2z" fill="#5a8ad0" />
      </svg>
      PaintTool SAI Ver.2 (64bit) Preview.2021.02.28 - 新建画布1
    </TitleBar>
    <MenuBar>
      {menus.map(([name, key]) => (
        <MenuItem key={key}>
          {name}
          <span>
            (<u>{key}</u>)
          </span>
        </MenuItem>
      ))}
    </MenuBar>
    <Body>
      <LeftSide />
      <BrushSide />
      <CanvasSide />
    </Body>
    <SideGrip />
    <Watermark>
      <svg width="42" height="42" viewBox="0 0 44 42">
        <path d="M42 0C24 2 2 10 1 26c0 5 3 8 7 8C4 22 18 8 42 0z" fill="#3f9fd0" />
        <path d="M31 5C17 9 3 20 8 30c3 5 12 4 17 0-6 1-12 1-12-5C13 17 22 10 31 5z" fill="#3a68b0" />
        <path d="M15 21c3-5 10-9 18-9 8 1 10 6 7 13C35 34 20 41 4 41c12-3 26-10 28-18 1-5-8-6-17-2z" fill="#52a860" />
        <path d="M4 41c12-3 21-8 26-14 0 6-10 13-26 14z" fill="#b8c850" />
      </svg>
      <div>
        极光下载站
        <a href="#home">www.xz7.com</a>
      </div>
    </Watermark>
    <Pointer width="420" height="160">
      <path d="M2 5l19-3-4 6 397 145.500-1 1L15 15l-2 4z" fill="#ff2414" />
    </Pointer>
  </Window>
);

export default App;
